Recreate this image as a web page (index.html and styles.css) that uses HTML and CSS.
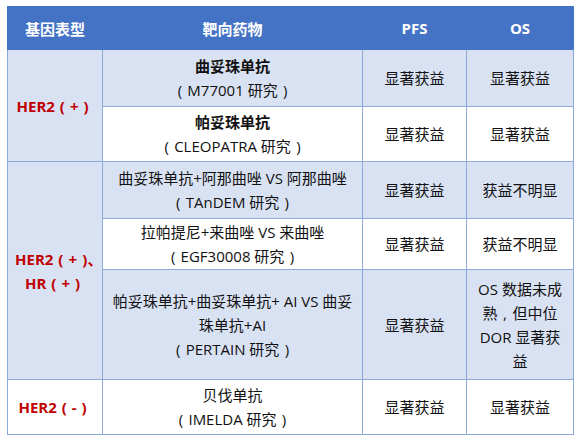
FILE: index.html
```html
<!DOCTYPE html>
<html lang="zh">
<head>
<meta charset="utf-8">
<link rel="stylesheet" href="styles.css">
</head>
<body>
<table class="tbl">
  <colgroup>
    <col class="c1"><col class="c2"><col class="c3"><col class="c4">
  </colgroup>
  <thead>
    <tr class="hdr">
      <th>基因表型</th><th>靶向药物</th><th>PFS</th><th>OS</th>
    </tr>
  </thead>
  <tbody>
    <tr class="r1 band">
      <td rowspan="2" class="geno band">HER2<span class="p">(</span>+<span class="p">)</span></td>
      <td><b>曲妥珠单抗</b><br><span class="p">(</span>M77001 研究<span class="p">)</span></td>
      <td>显著获益</td><td>显著获益</td>
    </tr>
    <tr class="r2">
      <td><b>帕妥珠单抗</b><br><span class="p">(</span>CLEOPATRA 研究<span class="p">)</span></td>
      <td>显著获益</td><td>显著获益</td>
    </tr>
    <tr class="r3 band">
      <td rowspan="3" class="geno band">HER2<span class="p">(</span>+<span class="p ph">)</span><span class="dun">、</span><br>HR<span class="p">(</span>+<span class="p">)</span></td>
      <td>曲妥珠单抗+阿那曲唑 VS 阿那曲唑<br><span class="p">(</span>TAnDEM 研究<span class="p">)</span></td>
      <td>显著获益</td><td>获益不明显</td>
    </tr>
    <tr class="r4">
      <td>拉帕提尼+来曲唑 VS 来曲唑<br><span class="p">(</span>EGF30008 研究<span class="p">)</span></td>
      <td>显著获益</td><td>获益不明显</td>
    </tr>
    <tr class="r5 band">
      <td>帕妥珠单抗+曲妥珠单抗+ AI VS 曲妥<br>珠单抗+AI<br><span class="p">(</span>PERTAIN 研究<span class="p">)</span></td>
      <td>显著获益</td><td>OS 数据未成<br>熟<span class="p">,</span>但中位<br>DOR 显著获<br>益</td>
    </tr>
    <tr class="r6">
      <td class="geno">HER2<span class="p">(</span>-<span class="p">)</span></td>
      <td>贝伐单抗<br><span class="p">(</span>IMELDA 研究<span class="p">)</span></td>
      <td>显著获益</td><td>显著获益</td>
    </tr>
  </tbody>
</table>
</body>
</html>
```
FILE: styles.css
```css
html, body {
  margin: 0;
  padding: 0;
  background: #ffffff;
}
body {
  padding: 6px 7px;
  font-family: "Open Sans", "Noto Sans CJK SC", sans-serif;
  font-size: 15px;
  color: #111;
}
.tbl {
  border-collapse: collapse;
  table-layout: fixed;
  width: 566px;
}
.c1 { width: 95px; }
.c2 { width: 260px; }
.c3 { width: 104px; }
.c4 { width: 107px; }
.tbl th {
  background: #4472c4;
  color: #fff;
  font-weight: bold;
  height: 42px;
  padding: 0;
  border: 1px solid #4472c4;
  font-size: 15px;
}
.tbl td {
  border: 1px solid #8eaadb;
  text-align: center;
  vertical-align: middle;
  line-height: 24px;
  padding: 0 4px;
  background: #fff;
}
.tbl tr.band td { background: #d9e2f3; }
.tbl td.geno {
  color: #c00000;
  font-weight: bold;
  background: #d9e2f3;
  padding: 0;
  white-space: nowrap;
}
.r6 td.geno { background: #fff; }
.p {
  display: inline-block;
  width: 1em;
  text-align: center;
}
.p.ph {
  width: 0.7em;
  text-align: right;
}
.dun {
  margin-right: -0.5em;
}
.r1 { height: 57px; }
.r2 { height: 55px; }
.r3 { height: 57px; }
.r4 { height: 51px; }
.r5 { height: 110px; }
.r6 { height: 55px; }
```
